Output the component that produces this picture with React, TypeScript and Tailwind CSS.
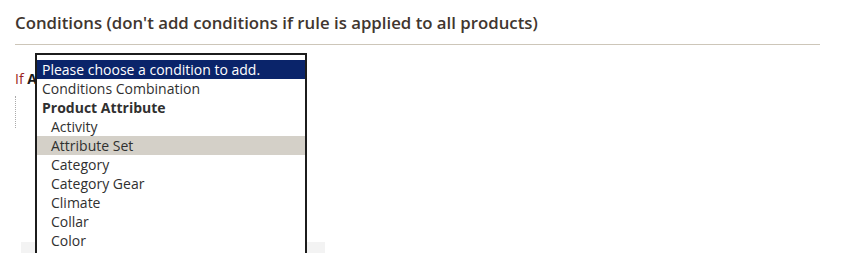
const groups = ['Activity', 'Attribute Set', 'Category', 'Category Gear', 'Climate', 'Collar', 'Color'];

export default function App() {
  return (
    <div className="relative w-[841px] h-[253px] overflow-hidden bg-white font-['Open_Sans',sans-serif] text-[#303030]">
      <div className="pl-[15px] pr-[21px]">
        {/* section title */}
        <div className="pt-[11px] pb-[10px] border-b border-[#cdc6b9]">
          <h2 className="text-[16.8px] leading-[23px] font-semibold text-[#41362f]">
            Conditions (don't add conditions if rule is applied to all products)
          </h2>
        </div>

        {/* rule tree */}
        <div className="pt-[24px]">
          <p className="text-[14px] leading-[19px]">
            <span className="text-[#9b2320]">If </span>
            <span className="font-bold text-[#1a1a1a]">A</span>
          </p>
          <div className="mt-[8px] h-[32px] border-l border-dotted border-[#aaa]" />
        </div>
      </div>

      {/* actions bar behind the open list */}
      <div className="absolute left-[21px] top-[242px] w-[304px] h-[20px] bg-[#f3f3f3]" />

      {/* open condition select */}
      <div className="absolute left-[35px] top-[53px] w-[272px] border-2 border-[#1c1c1c] bg-white pt-[5px] pb-[20px] text-[14px] leading-[19px]">
        <div className="bg-[#0a246a] text-white pl-[5px]">Please choose a condition to add.</div>
        <div className="pl-[5px]">Conditions Combination</div>
        <div className="pl-[5px] font-bold">Product Attribute</div>
        {groups.map((g) => (
          <div key={g} className={`pl-[14px] ${g === 'Attribute Set' ? 'bg-[#d4d0c8]' : ''}`}>
            {g}
          </div>
        ))}
      </div>
    </div>
  );
}
